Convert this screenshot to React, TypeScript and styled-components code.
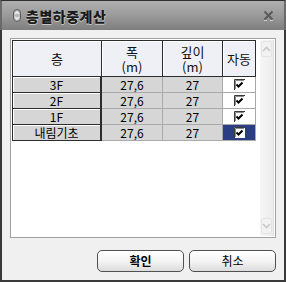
import React from 'react';
import styled, { createGlobalStyle } from 'styled-components';

const GlobalStyle = createGlobalStyle`
  html, body {
    margin: 0;
    padding: 0;
    background: #f0f0f0;
  }
  body {
    font-family: "Noto Sans CJK KR", "DejaVu Sans", sans-serif;
  }
`;

const Window = styled.div`
  width: 286px;
  height: 282px;
  box-sizing: border-box;
  background: #f0f0f0;
  border-left: 2px solid #3a3a3a;
  border-right: 2px solid #3a3a3a;
  border-bottom: 2px solid #3a3a3a;
  display: flex;
  flex-direction: column;
`;

const TitleBar = styled.div`
  height: 30px;
  box-sizing: border-box;
  border-top: 1px solid #2e2e2e;
  background: linear-gradient(#b0b0b0, #9a9a9a 50%, #7e7e7e);
  display: flex;
  align-items: center;
  padding: 0 10px 0 11px;
  margin: 0 -2px;
  border-left: 2px solid #6a6a6a;
  border-right: 2px solid #6a6a6a;
`;

const Title = styled.div`
  flex: 1;
  margin-left: 5px;
  font-size: 14px;
  font-weight: 900;
  color: #1a1a1a;
  letter-spacing: 0.5px;
  text-shadow: 0 1px 0 #c8c8c8, 1px 0 0 #bcbcbc;
`;

const Body = styled.div`
  flex: 1;
  display: flex;
  flex-direction: column;
  padding: 8px 8px 8px;
`;

const Panel = styled.div`
  height: 200px;
  box-sizing: border-box;
  border: 1px solid #a0a0a0;
  background: #fff;
  padding: 1px;
  display: flex;
  gap: 2px;
`;

const Grid = styled.div`
  display: grid;
  grid-template-columns: 89px 61px 60px 33px;
  grid-template-rows: 36px repeat(4, 16px);
  align-self: flex-start;
  border-top: 1px solid #2c2c2c;
  border-left: 1px solid #2c2c2c;
`;

const HeadCell = styled.div`
  background: #eef0f6;
  border-right: 1px solid #2c2c2c;
  border-bottom: 1px solid #2c2c2c;
  box-shadow: inset 1px 1px 0 #fff;
  display: flex;
  align-items: center;
  justify-content: center;
  text-align: center;
  font-size: 13px;
  line-height: 15px;
  color: #111;
  white-space: pre-line;
`;

const RowLabel = styled.div`
  background: #d6d6d6;
  border-right: 2px solid #2c2c2c;
  border-bottom: 1px solid #2c2c2c;
  box-shadow: inset 1px 1px 0 #fff;
  display: flex;
  align-items: center;
  justify-content: center;
  font-size: 12px;
  line-height: 15px;
  color: #000;
`;

const DataCell = styled.div`
  background: #d6d6d6;
  border-right: 1px solid #a9a9a9;
  border-bottom: 1px solid #a9a9a9;
  display: flex;
  align-items: center;
  justify-content: center;
  font-size: 12px;
  line-height: 15px;
  color: #000;
`;

const CheckCell = styled.div<{ $selected?: boolean }>`
  background: ${({ $selected }) => ($selected ? '#2b3d83' : '#fff')};
  border-right: 1px solid #a9a9a9;
  border-bottom: 1px solid #a9a9a9;
  display: flex;
  align-items: center;
  justify-content: center;
`;

const Spacer = styled.div`
  flex: 1;
`;

const ScrollBar = styled.div`
  width: 17px;
  background: linear-gradient(90deg, #f6f6f6, #ececec);
  border-right: 1px solid #e0e0e0;
  display: flex;
  flex-direction: column;
  justify-content: space-between;
  padding: 1px 0 2px;
`;

const ScrollButton = styled.div`
  height: 14px;
  margin: 0 1px;
  border: 1px solid #e4e4e4;
  border-radius: 2px;
  background: #f2f2f2;
  display: flex;
  align-items: center;
  justify-content: center;
`;

const ButtonRow = styled.div`
  display: flex;
  justify-content: flex-end;
  gap: 5px;
  margin-top: 12px;
`;

const Button = styled.button<{ $bold?: boolean }>`
  width: 87px;
  height: 22px;
  box-sizing: border-box;
  border: 1px solid #505050;
  border-radius: 5px;
  background: linear-gradient(#ffffff, #f4f4f4 50%, #dcdcdc);
  box-shadow: inset 0 1px 0 #fff;
  font-family: "Noto Sans CJK KR", "DejaVu Sans", sans-serif;
  font-size: 12px;
  font-weight: ${({ $bold }) => ($bold ? 700 : 400)};
  color: #000;
  padding: 0;
  line-height: 18px;
`;

const rows = [
  { name: '3F', width: '27,6', depth: '27' },
  { name: '2F', width: '27,6', depth: '27' },
  { name: '1F', width: '27,6', depth: '27' },
  { name: '내림기초', width: '27,6', depth: '27' },
];

const CheckBox: React.FC = () => (
  <svg width="11" height="11" viewBox="0 0 11 11">
    <rect x="0" y="0" width="11" height="11" fill="#fff" />
    <path d="M0.5 11V0.5H11" stroke="#3a3a3a" strokeWidth="1" fill="none" />
    <path d="M1.5 10V1.5H10" stroke="#8a8a8a" strokeWidth="1" fill="none" />
    <path d="M2.5 5.5L4.5 7.5L8.5 3.5" stroke="#000" strokeWidth="2" fill="none" />
  </svg>
);

const App: React.FC = () => (
  <>
    <GlobalStyle />
    <Window>
      <TitleBar>
        <svg width="8" height="13" viewBox="0 0 8 13">
          <rect x="0.5" y="0.5" width="7" height="12" rx="3.5" fill="#b8b8b8" stroke="#5e5e5e" strokeWidth="1" />
          <path d="M2 5L4 3L6 5M2 8L4 10L6 8" stroke="#f4f4f4" strokeWidth="1.3" fill="none" />
        </svg>
        <Title>층별하중계산</Title>
        <svg width="11" height="11" viewBox="0 0 11 11">
          <path d="M1.5 1.5L9.5 9.5M9.5 1.5L1.5 9.5" stroke="#5a5a5a" strokeWidth="2" />
          <path d="M1 10.5H4M7 10.5H10" stroke="#d0d0d0" strokeWidth="1" />
        </svg>
      </TitleBar>
      <Body>
        <Panel>
          <Grid>
            <HeadCell>층</HeadCell>
            <HeadCell>{'폭\n(m)'}</HeadCell>
            <HeadCell>{'깊이\n(m)'}</HeadCell>
            <HeadCell>자동</HeadCell>
            {rows.map((r, i) => (
              <React.Fragment key={r.name}>
                <RowLabel>{r.name}</RowLabel>
                <DataCell>{r.width}</DataCell>
                <DataCell>{r.depth}</DataCell>
                <CheckCell $selected={i === rows.length - 1}>
                  <CheckBox />
                </CheckCell>
              </React.Fragment>
            ))}
          </Grid>
          <Spacer />
          <ScrollBar>
            <ScrollButton>
              <svg width="9" height="6" viewBox="0 0 9 6">
                <path d="M1 5L4.5 1.5L8 5" stroke="#c8c8c8" strokeWidth="1.6" fill="none" />
              </svg>
            </ScrollButton>
            <ScrollButton>
              <svg width="9" height="6" viewBox="0 0 9 6">
                <path d="M1 1L4.5 4.5L8 1" stroke="#c8c8c8" strokeWidth="1.6" fill="none" />
              </svg>
            </ScrollButton>
          </ScrollBar>
        </Panel>
        <ButtonRow>
          <Button $bold>확인</Button>
          <Button>취소</Button>
        </ButtonRow>
      </Body>
    </Window>
  </>
);

export default App;
